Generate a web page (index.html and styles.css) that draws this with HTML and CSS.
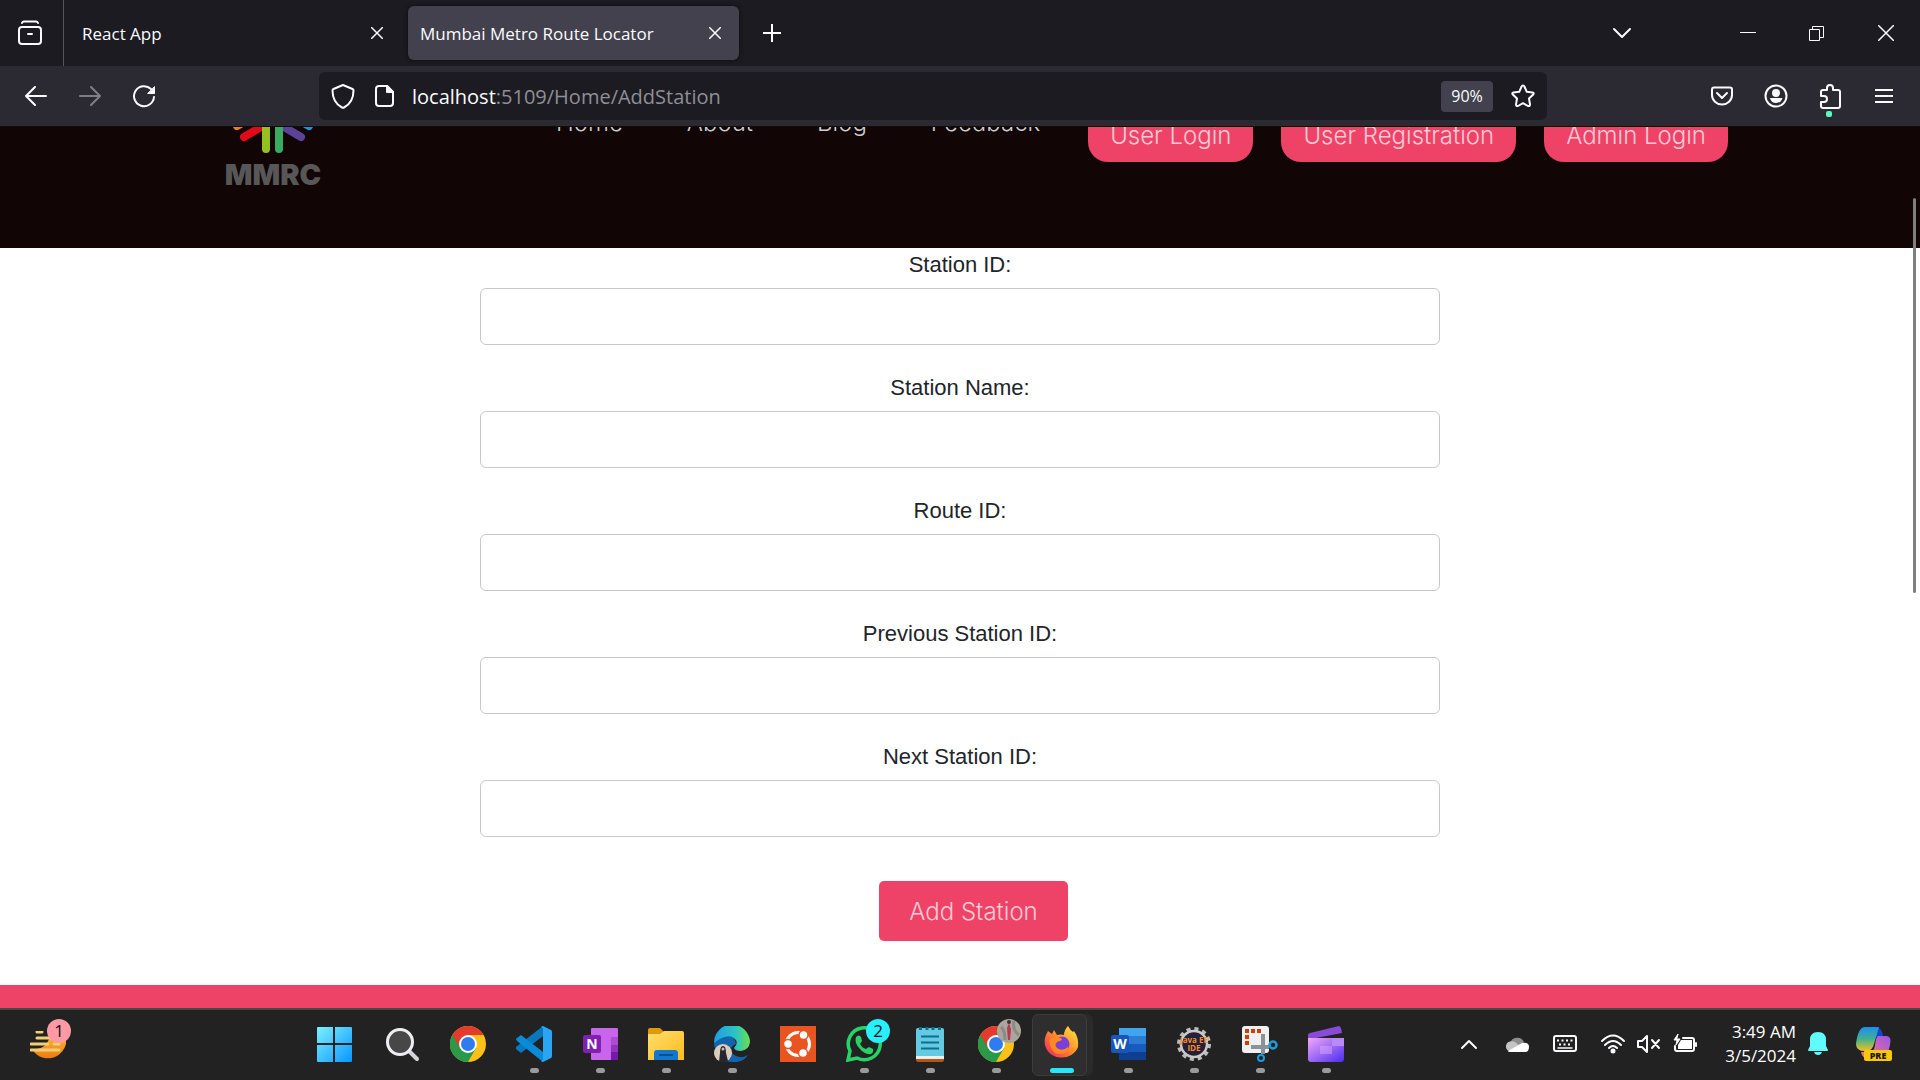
FILE: index.html
```html
<!DOCTYPE html>
<html lang="en">
<head>
<meta charset="utf-8">
<title>Mumbai Metro Route Locator</title>
<link rel="stylesheet" href="styles.css">
</head>
<body>
<div class="desktop">
  <header class="tabstrip">
    <button class="recent" aria-label="Recent browsing"><svg width="24" height="24" viewBox="0 0 24 24" class="line"><path d="M4 2q.5-1.500 2-1.500h12q1.500 0 2 1.500"/><rect x="1" y="6" width="22" height="17" rx="3"/><path d="M10 13h4"/></svg></button>
    <div class="tab"><span class="tab-title">React App</span><button class="tab-close" aria-label="Close tab"><svg width="12" height="12" viewBox="0 0 12 12" class="thin"><path d="M0 0l12 12M12 0L0 12"/></svg></button></div>
    <div class="tab tab-active"><span class="tab-title">Mumbai Metro Route Locator</span><button class="tab-close" aria-label="Close tab"><svg width="12" height="12" viewBox="0 0 12 12" class="thin"><path d="M0 0l12 12M12 0L0 12"/></svg></button></div>
    <button class="tool" aria-label="New tab"><svg width="18" height="18" viewBox="0 0 18 18" class="line"><path d="M9 0v18M0 9h18"/></svg></button>
    <div class="window-controls">
      <button class="tool list-tabs" aria-label="List all tabs"><svg width="20" height="12" viewBox="0 0 20 12" class="line"><path d="M2 2l8 8 8-8"/></svg></button>
      <button class="win" aria-label="Minimize"><svg width="16" height="16" viewBox="0 0 16 16" class="hair"><path d="M0 7.500h16"/></svg></button>
      <button class="win" aria-label="Restore"><svg width="15" height="15" viewBox="0 0 15 15" class="hair"><path d="M.5 3.500h10v11H.5zM3.500 3.500v-3h11v11h-4"/></svg></button>
      <button class="win" aria-label="Close"><svg width="16" height="16" viewBox="0 0 16 16" class="thin"><path d="M0 0l16 16M16 0L0 16"/></svg></button>
    </div>
  </header>

  <div class="toolbar">
    <div class="tools">
      <button class="tool" aria-label="Back"><svg width="22" height="20" viewBox="0 0 22 20" class="line"><path d="M21 10H1M10 1l-9 9 9 9"/></svg></button>
      <button class="tool dim" aria-label="Forward"><svg width="22" height="20" viewBox="0 0 22 20" class="line"><path d="M1 10h20M12 1l9 9-9 9"/></svg></button>
      <button class="tool" aria-label="Reload"><svg width="24" height="24" viewBox="0 0 24 24" class="line"><path d="M22 13a10 10 0 1 1-3-8"/><path d="M22.500 3v6.500H16z" fill="#fbfbfe" stroke-width="1"/></svg></button>
    </div>
    <div class="urlbar">
      <button class="shield" aria-label="Tracking protection"><svg width="24" height="26" viewBox="0 0 24 26" class="line"><path d="M12 2l9.500 4q1 .5 1 1.500 0 12-9.500 17-1 .5-2 0Q1.500 19.500 1.500 7.500q0-1 1-1.500z"/></svg></button>
      <button class="docinfo" aria-label="Site information"><svg width="20" height="22" viewBox="0 0 20 22" class="line"><path d="M4 1h8l6 6v11q0 3-3 3H4q-3 0-3-3V4q0-3 3-3z"/><path d="M12 1v6h6z" fill="#fbfbfe"/></svg></button>
      <div class="address"><span class="host">localhost</span>:5109/Home/AddStation</div>
      <button class="zoom">90%</button>
      <button class="star" aria-label="Bookmark"><svg width="24" height="24" viewBox="0 0 24 24" class="line"><path d="M12 1.500q1 0 1.400 1l2.400 5.300 5.700.7q2 .5.700 2L18 14.500l1 6q0 2-2 1.500l-5-2.800L7 22q-2 .5-2-1.500l1-6-4.200-4q-1.300-1.500.700-2l5.700-.7 2.400-5.300q.4-1 1.400-1z"/></svg></button>
    </div>
    <div class="tools">
      <button class="tool" aria-label="Pocket"><svg width="22" height="20" viewBox="0 0 22 20" class="line"><path d="M3 1.500h16q2 0 2 2V9a10 9.500 0 0 1-20 0V3.500q0-2 2-2z"/><path d="M6 7l5 5 5-5"/></svg></button>
      <button class="tool" aria-label="Account"><svg width="24" height="24" viewBox="0 0 24 24" class="line"><circle cx="12" cy="12" r="10.500"/><g fill="#fbfbfe" stroke="none"><circle cx="12" cy="9" r="4"/><path d="M6 14h12.500q-1.500 5-6.500 5t-6-5z"/></g></svg></button>
      <button class="tool alert" aria-label="Extensions"><svg width="22" height="25" viewBox="0 0 22 25" class="line"><path d="M2 8q0-2 2-2h4V4a3 3 0 0 1 6 0v2h5q2 0 2 2v14q0 2-2 2H4q-2 0-2-2v-4h3a3 3 0 0 0 0-6H2z"/></svg></button>
      <button class="tool" aria-label="Menu"><svg width="18" height="16" viewBox="0 0 18 16" class="line"><path d="M0 2h18M0 8h18M0 14h18"/></svg></button>
    </div>
  </div>

  <div class="viewport">
    <div class="page">
      <header class="site-header">
        <svg class="logo" width="94" height="112" viewBox="0 0 94 112" role="img" aria-label="MMRC">
          <g fill="none" stroke-width="8" stroke-linecap="round">
            <path d="M11 51l23-13" stroke="#f07d13"/><path d="M83 51L60 38" stroke="#1d93d2"/>
            <path d="M18 62l22-13" stroke="#e30a17"/><path d="M75 62L53 49" stroke="#5c4397"/>
            <path d="M40 46v28" stroke="#95c11f"/><path d="M53 46v28" stroke="#3aaa60"/>
          </g>
          <text x="47" y="110" text-anchor="middle" class="logo-name">MMRC</text>
        </svg>
        <nav class="links"><a href="#">Home</a><a href="#">About</a><a href="#">Blog</a><a href="#">Feedback</a></nav>
        <div class="accounts"><button class="pill">User Login</button><button class="pill">User Registration</button><button class="pill">Admin Login</button></div>
      </header>
      <form class="station-form">
        <label for="sid">Station ID:</label><input id="sid" type="text">
        <label for="sname">Station Name:</label><input id="sname" type="text">
        <label for="rid">Route ID:</label><input id="rid" type="text">
        <label for="pid">Previous Station ID:</label><input id="pid" type="text">
        <label for="nid">Next Station ID:</label><input id="nid" type="text">
        <button class="submit" type="button">Add Station</button>
      </form>
      <footer class="site-footer"></footer>
    </div>
    <div class="scrollbar"></div>
  </div>

  <footer class="taskbar">
    <svg width="0" height="0" class="defs"><defs>
      <linearGradient id="win" gradientUnits="userSpaceOnUse" x1="0" y1="0" x2="36" y2="36"><stop stop-color="#7df3ff"/><stop offset="1" stop-color="#0b95ff"/></linearGradient>
      <linearGradient id="sun" x2="0" y2="1"><stop stop-color="#f9c33c"/><stop offset="1" stop-color="#f07a12"/></linearGradient>
      <linearGradient id="fold" x2="1" y2="1"><stop stop-color="#ffdf70"/><stop offset="1" stop-color="#fdbb1a"/></linearGradient>
      <linearGradient id="edge"><stop stop-color="#1e9de3"/><stop offset=".6" stop-color="#2cc3c4"/><stop offset="1" stop-color="#6be04a"/></linearGradient>
      <linearGradient id="fox" x1="1" x2="0" y2="1"><stop stop-color="#fff04a"/><stop offset=".45" stop-color="#ff9526"/><stop offset="1" stop-color="#f5156c"/></linearGradient>
      <linearGradient id="clip" x2="1" y2="1"><stop stop-color="#f2a8f8"/><stop offset="1" stop-color="#4c2cf0"/></linearGradient>
      <linearGradient id="cop1" x2="0" y2="1"><stop stop-color="#1b8ff0"/><stop offset=".5" stop-color="#43b08f"/><stop offset="1" stop-color="#f5c21b"/></linearGradient>
      <linearGradient id="cop2" x1="1" x2="0" y2="1"><stop stop-color="#9a55f0"/><stop offset="1" stop-color="#ff7a68"/></linearGradient>
    </defs></svg>
    <button class="widget" aria-label="Widgets"><svg width="36" height="28" viewBox="0 0 36 28"><path d="M34 0a17 17 0 0 1-32 18q13 2 18-12z" fill="url(#sun)"/><path d="M7 1h5M7 7h17M1 13h17M24 13h5M1 19h28" stroke="#f2cf74" stroke-width="3" stroke-linecap="round"/></svg><span class="badge badge-pink">1</span></button>
    <div class="apps">
      <button class="app" aria-label="Start"><svg width="36" height="36" viewBox="0 0 36 36"><path d="M1 2q0-1 1-1h15v16H1zM19 1h16q1 0 1 1v15H19zM1 19h16v17H2q-1 0-1-1zM19 19h17v16q0 1-1 1H19z" fill="url(#win)"/></svg></button>
      <button class="app" aria-label="Search"><svg width="36" height="36" viewBox="0 0 36 36"><path d="M25 25l8 8" stroke="#d4d4dc" stroke-width="4" stroke-linecap="round"/><circle cx="16" cy="16" r="12.500" fill="#474747" stroke="#eeeef0" stroke-width="3"/></svg></button>
      <button class="app" aria-label="Chrome"><svg width="36" height="36" viewBox="0 0 36 36"><circle cx="18" cy="18" r="18" fill="#fbc116"/><path d="M18 18L2.400 9A18 18 0 0 0 18 36l8-14z" fill="#2a9a48"/><path d="M18 9h15.600A18 18 0 0 0 2.400 9L10 22z" fill="#e33b2e"/><circle cx="18" cy="18" r="9" fill="#fff"/><circle cx="18" cy="18" r="7" fill="#2f7bf0"/></svg></button>
      <button class="app open" aria-label="Visual Studio Code"><svg width="36" height="36" viewBox="0 0 36 36"><path d="M27 0v10L5 27l-5-4q-1-1 0-2z" fill="#0a78bd"/><path d="M27 36V26L5 9l-4 3q-2 1 0 3z" fill="#0a8bd8"/><path d="M27 0l8 4q1 .5 1 2v24q0 1.500-1 2l-8 4q-1 0-2-1 2 0 2-3V4q0-3-2-3 1-1 2-1z" fill="#2aa5f5"/></svg></button>
      <button class="app open" aria-label="OneNote"><svg width="36" height="36" viewBox="0 0 36 36"><rect x="9" y="2" width="27" height="32" rx="1" fill="#c965ea"/><path d="M29 11h7v8h-7z" fill="#ae4bd5"/><path d="M29 19h7v7h-7z" fill="#9332bf"/><path d="M29 26h7v8h-7z" fill="#7719aa"/><rect x="1" y="9" width="18" height="18" rx="2" fill="#8020b0"/><text x="10" y="23" class="glyph">N</text></svg></button>
      <button class="app open" aria-label="File Explorer"><svg width="36" height="36" viewBox="0 0 36 36"><path d="M0 4q0-2 2-2h10l4 4-4 4H0z" fill="#e09a08"/><path d="M0 8h12l4-3h18q2 0 2 2v27H0z" fill="url(#fold)"/><path d="M6 34v-7q0-3 3-3h18q3 0 3 3v7z" fill="#1078cf"/><path d="M11 29h14" stroke="#0a4d91" stroke-width="2"/></svg></button>
      <button class="app open" aria-label="Edge"><svg width="36" height="36" viewBox="0 0 36 36"><path d="M0 18Q3 8 15 9q6 1 7 9-8 3-3 10 6 6 15 1-5 8-16 7Q2 35 0 18z" fill="#1464ad"/><path d="M0 17A18 18 0 0 1 36 16q-1 8-9 9-6 0-7-3 4-4 2-8Q15 5 0 17z" fill="url(#edge)"/><circle cx="9" cy="27" r="9" fill="#dacdbb"/><path d="M5 36l1-9q0-7 3-7t3 7l2 8q-4 2-9 1z" fill="#242633"/><circle cx="9" cy="23" r="1.500" fill="#e6b49a"/></svg></button>
      <button class="app" aria-label="Ubuntu"><svg width="36" height="36" viewBox="0 0 36 36"><path d="M0 0h36v36H0z" fill="#e95420"/><circle cx="18" cy="18" r="11.500" fill="none" stroke="#fff" stroke-width="3"/><g fill="#fff" stroke="#e95420" stroke-width="1.500"><circle cx="8" cy="18" r="4.500"/><circle cx="23.500" cy="9" r="4.500"/><circle cx="23" cy="27" r="4.500"/></g></svg></button>
      <button class="app open" aria-label="WhatsApp"><svg width="36" height="36" viewBox="0 0 36 36"><path d="M2 34l2-9a16 16 0 1 1 7 7z" fill="none" stroke="#25d366" stroke-width="3.500"/><path d="M10 11q3-3 5 0l1 4-2 3q2 4 6 5l3-2 4 2q1 3-2 5-6 1-11-5-6-6-4-12z" fill="#25d366"/></svg><span class="badge badge-cyan">2</span></button>
      <button class="app open" aria-label="Notepad"><svg width="36" height="36" viewBox="0 0 36 36"><path d="M4 32h28v2q0 2-2 2H6q-2 0-2-2z" fill="#b5550f"/><path d="M4 28h28v5H4z" fill="#eee"/><path d="M4 4q0-2 2-2h24q2 0 2 2v26H4z" fill="#66c9e2"/><path d="M9 10.500h18M9 16.500h18M9 22.500h18" stroke="#08708e" stroke-width="2"/><path d="M8.500 1v3M15 1v3M21 1v3M27.500 1v3" stroke="#08708e" stroke-width="3"/></svg></button>
      <button class="app open" aria-label="Chrome profile"><svg width="44" height="44" viewBox="0 0 44 44" class="with-avatar"><g transform="translate(0 8)"><circle cx="18" cy="18" r="18" fill="#fbc116"/><path d="M18 18L2.400 9A18 18 0 0 0 18 36l8-14z" fill="#2a9a48"/><path d="M18 9h15.600A18 18 0 0 0 2.400 9L10 22z" fill="#e33b2e"/><circle cx="18" cy="18" r="9" fill="#fff"/><circle cx="18" cy="18" r="7" fill="#2f7bf0"/></g><circle cx="31" cy="13" r="12" fill="#a9a69f"/><path d="M23 9q4 3 4 13M36 3q-2 9 5 14" stroke="#8c8c82" stroke-width="3" fill="none"/><path d="M31 5l2 6-1 11h-2l-1-12z" fill="#b93950"/><circle cx="31" cy="4" r="2" fill="#40303a"/></svg></button>
      <button class="app open current" aria-label="Firefox"><svg width="36" height="36" viewBox="0 0 36 36"><path d="M2 9l2-4 4 3 2-4 3 5q4-1 7 0 0-5 4-9 2 4 5 6l1-1q5 7 4 16a17 15 0 0 1-33-2Q0 13 2 9z" fill="url(#fox)"/><circle cx="18" cy="18" r="7.500" fill="#7a3fd8"/><path d="M5 14q5-5 12-2l1 2-5 2q-3 3 0 6 5 4 11-1 0 7-8 7-9 0-11-14z" fill="#ff8a20"/></svg></button>
      <button class="app open" aria-label="Word"><svg width="36" height="36" viewBox="0 0 36 36"><path d="M9 2h27v8H9z" fill="#41a5ee"/><path d="M9 10h27v8H9z" fill="#2b7cd3"/><path d="M9 18h27v8H9z" fill="#185abd"/><path d="M9 26h27v8H9z" fill="#103f91"/><rect x="1" y="9" width="18" height="18" rx="2" fill="#1856ba"/><text x="10" y="23" class="glyph">W</text></svg></button>
      <button class="app open" aria-label="Java EE IDE"><svg width="36" height="36" viewBox="0 0 36 36"><circle cx="18" cy="18" r="15" fill="none" stroke="#bcbcbc" stroke-width="4" stroke-dasharray="4 3.850"/><circle cx="18" cy="18" r="13" fill="#252039" stroke="#c9c9c9" stroke-width="2.500"/><text x="18" y="17" class="ide">Java EE</text><text x="18" y="25" class="ide">IDE</text></svg></button>
      <button class="app open" aria-label="Snipping Tool"><svg width="36" height="36" viewBox="0 0 36 36"><rect width="27" height="27" rx="3" fill="#eef0f2"/><path d="M3 5h4m2 0h4m2 0h4M5 9v4m0 2v4" stroke="#d83b01" stroke-width="4"/><path d="M21 8v20M9 21h18" stroke="#8d9299" stroke-width="4"/><circle cx="31" cy="19" r="3.500" fill="none" stroke="#1d9be0" stroke-width="2.500"/><circle cx="19" cy="32" r="3" fill="none" stroke="#1d9be0" stroke-width="2"/></svg></button>
      <button class="app open" aria-label="Clipchamp"><svg width="36" height="36" viewBox="0 0 36 36"><path d="M0 9q0-2 2-2L31 0q2 0 3 7L8 12H0z" fill="#8a4ad8"/><path d="M0 12h36v21q0 3-3 3H3q-3 0-3-3z" fill="url(#clip)"/><path d="M12 20h12v8H12z" fill="#d6a5fb" opacity=".5"/><path d="M24 12h12v8H24z" fill="#b88af8"/></svg></button>
    </div>
    <div class="tray">
      <button class="tray-btn" aria-label="Show hidden icons"><svg width="18" height="12" viewBox="0 0 18 12" class="line"><path d="M2 10l7-7 7 7"/></svg></button>
      <button class="tray-btn" aria-label="OneDrive"><svg width="24" height="18" viewBox="0 0 24 18"><path d="M5 8a7.500 7.500 0 0 1 14-1l-5 5z" fill="#8e8e8e"/><path d="M4 16a5 5 0 0 1 1-9.500q4-1 7 2l8 7z" fill="#c4c4c4"/><path d="M3 16l14-8q7-1 7 4 0 5-4 5H5q-2 0-2-1z" fill="#fff"/></svg></button>
      <button class="tray-btn" aria-label="Keyboard"><svg width="24" height="18" viewBox="0 0 24 18" class="line"><rect x="1" y="1" width="22" height="15" rx="2"/><path d="M4 5.500h16M6 9.500h12" stroke-dasharray="2 2.500" stroke-linecap="butt"/><path d="M5 13h14" stroke-width="1.500"/></svg></button>
      <button class="status" aria-label="Network, volume and battery">
        <svg width="24" height="20" viewBox="0 0 24 20" class="line"><path d="M1 7q11-11 22 0M4 11q8-8 16 0M8 14q4-4 8 0"/><circle cx="12" cy="17" r="1.500" fill="#fff"/></svg>
        <svg width="24" height="20" viewBox="0 0 24 20" class="line"><path d="M1 7h4l5-5v16l-5-5H1zM15 6l7 8M22 6l-7 8"/></svg>
        <svg width="24" height="20" viewBox="0 0 24 20" class="line"><path d="M10 4h9q2 0 2 2v9q0 2-2 2H4q-2 0-2-2v-3"/><path d="M8 6h11v9H5v-4z" fill="#fff" stroke="none"/><path d="M5 0L1 6h3l-1 5 4-6H4z" fill="#fff" stroke-width="1"/><path d="M23 9v3"/></svg>
      </button>
      <button class="clock"><span>3:49 AM</span><span>3/5/2024</span></button>
      <button class="bell" aria-label="Notifications"><svg width="20" height="24" viewBox="0 0 20 24"><path d="M10 0q8 0 8 8v6l2 4q0 1-1 1H1q-1 0-1-1l2-4V8q0-8 8-8zM6 20h8q-1 3-4 3t-4-3z" fill="#60fbff"/></svg></button>
      <button class="copilot" aria-label="Copilot"><svg width="36" height="36" viewBox="0 0 36 36"><path d="M19 1q7 0 8 9l-9 2z" fill="#1646c8"/><path d="M9 1h14l-5 17q-2 7-7 7-11 1-11-7Q2 1 9 1z" fill="url(#cop1)"/><path d="M22 10h9q5 1 3 9-2 12-11 14h-9q-8 0-9-7h9q4 0 5-7 1-8 3-9z" fill="url(#cop2)"/><rect x="8" y="24" width="28" height="11" rx="2" fill="#fcc70b"/><text x="22" y="33" class="pre">PRE</text></svg></button>
    </div>
  </footer>
</div>
</body>
</html>
```
FILE: styles.css
```css
* { box-sizing: border-box; }

body {
  margin: 0;
  font-family: "Open Sans", "Noto Sans", sans-serif;
  color: #fbfbfe;
  background: #1c1b22;
}

button {
  display: flex;
  align-items: center;
  justify-content: center;
  margin: 0;
  padding: 0;
  border: 0;
  background: none;
  color: inherit;
  font: inherit;
}

.desktop {
  display: flex;
  flex-direction: column;
  height: 100vh;
  overflow: hidden;
}

.line, .thin, .hair { fill: none; stroke: #fbfbfe; stroke-width: 2; stroke-linecap: round; stroke-linejoin: round; }
.thin { stroke-width: 1.5; stroke-linecap: butt; }
.hair { stroke-width: 1; stroke-linecap: butt; stroke-linejoin: miter; }

/* Browser tabs */
.tabstrip { display: flex; flex: none; align-items: center; height: 66px; background: #1c1b22; }
.recent { width: 64px; height: 66px; padding-right: 3px; border-right: 1px solid #56555d; }
.recent svg { overflow: visible; }
.tab {
  display: flex;
  align-items: center;
  justify-content: space-between;
  width: 331px;
  height: 54px;
  margin-left: 6px;
  padding: 0 12px;
  border-radius: 6px;
  font-size: 17px;
}
.tab-active { margin-left: 7px; background: #42414d; box-shadow: 0 0 4px #0c0c0d; }
.tab-title { white-space: nowrap; }
.tab-close { width: 24px; height: 24px; }
.tool { position: relative; width: 54px; height: 48px; }
.tab-active + .tool { margin-left: 6px; }
.window-controls { display: flex; align-items: center; margin-left: auto; }
.list-tabs { margin-right: 64px; }
.win { width: 69px; height: 48px; }

/* Navigation toolbar */
.toolbar {
  display: flex;
  flex: none;
  align-items: center;
  height: 61px;
  background: #2b2a33;
  border-bottom: 1px solid #0c0c0d;
}
.tools { display: flex; padding: 0 9px; }
.tools:first-child { width: 319px; }
.tools:last-child { width: 373px; justify-content: flex-end; }
.dim { opacity: .4; }
.alert::after {
  content: "";
  position: absolute;
  left: 23px;
  bottom: 3px;
  width: 6px;
  height: 6px;
  border-radius: 2px;
  background: #54ffbd;
}
.urlbar { display: flex; flex: 1; align-items: center; height: 48px; border-radius: 6px; background: #1c1b22; }
.shield, .star { width: 48px; }
.docinfo { width: 36px; }
.address { flex: 1; padding-left: 9px; font-size: 20px; color: #8f8f94; }
.host { color: #fbfbfe; }
.zoom { width: 52px; height: 31px; margin-right: 6px; border-radius: 4px; background: #42414d; font-size: 16px; }

/* Web page, scrolled down a little */
.viewport { position: relative; flex: 1; overflow: hidden; background: #fff; }
.page { margin-top: -72px; font-family: Inter, "Open Sans", sans-serif; }
.scrollbar { position: absolute; top: 71px; right: 4px; width: 3px; height: 395px; border-radius: 2px; background: #7f7f7f; }

.site-header {
  display: flex;
  align-items: flex-start;
  height: 193px;
  padding: 20px 192px 0 226px;
  background: #110505;
}
.logo { flex: none; overflow: visible; }
.logo-name { font: 900 29px Inter, sans-serif; fill: #575757; }
.links { display: flex; gap: 64px; margin-left: 236px; padding-top: 33px; }
.links a { color: #d0cdcd; font-size: 24px; font-weight: 300; line-height: 30px; text-decoration: none; }
.accounts { display: flex; gap: 28px; margin-left: auto; padding-top: 33px; }
.pill {
  height: 54px;
  padding: 0 22px;
  border-radius: 20px;
  background: #ef4267;
  color: #fbcbd6;
  font-size: 24px;
  font-weight: 300;
  white-space: nowrap;
}

.station-form {
  display: flex;
  flex-direction: column;
  align-items: center;
  width: 50%;
  margin: 0 auto;
  padding-bottom: 44px;
}
.station-form label {
  margin-bottom: 6px;
  color: #212529;
  font-family: "Liberation Sans", Arial, sans-serif;
  font-size: 22px;
  line-height: 34px;
}
.station-form input {
  width: 100%;
  height: 57px;
  margin-bottom: 26px;
  padding: 0 12px;
  border: 1px solid #c8c8c8;
  border-radius: 6px;
  background: #fff;
  font-size: 22px;
}
.submit {
  height: 60px;
  margin: 18px 0 0 27px;
  padding: 0 30px;
  border-radius: 5px;
  background: #ef4267;
  color: #fbcbd6;
  font-size: 24px;
  font-weight: 300;
}
.site-footer { height: 60px; background: #ef4267; }

/* Taskbar */
.taskbar { display: flex; flex: none; height: 72px; border-top: 2px solid #474747; background: #222; color: #fff; }
.defs { position: absolute; }
.widget { position: relative; width: 36px; margin: 0 235px 0 30px; }
.apps { display: flex; }
.app { position: relative; width: 66px; height: 68px; }
.app:first-child { margin-right: 2px; }
.badge {
  position: absolute;
  top: 9px;
  width: 24px;
  height: 24px;
  border-radius: 50%;
  color: #111;
  font-size: 17px;
  line-height: 24px;
  text-align: center;
}
.badge-pink { left: 17px; background: #ff99a4; }
.badge-cyan { left: 35px; background: #26f0fb; }
.open::after {
  content: "";
  position: absolute;
  bottom: 5px;
  left: 29px;
  width: 9px;
  height: 5px;
  border-radius: 3px;
  background: #9a9a9a;
}
.with-avatar { margin: 0 0 8px 8px; }
.current::before {
  content: "";
  position: absolute;
  top: 4px;
  left: 3px;
  width: 53px;
  height: 60px;
  border: 1px solid #3c3c3c;
  border-radius: 6px;
  background: #2e2e2e;
  box-shadow: 6px 0 0 #2a2a2a;
}
.current svg { position: relative; }
.current::after { left: 21px; width: 24px; background: #26e6f8; }
.glyph { font: bold 14px "Open Sans", sans-serif; fill: #fff; text-anchor: middle; }
.ide { font: bold 8px "Open Sans", sans-serif; fill: #f58a2c; text-anchor: middle; }
.pre { font: 800 9px "Open Sans", sans-serif; fill: #1b1b1b; text-anchor: middle; }

.tray { display: flex; align-items: center; height: 68px; margin-left: auto; padding-right: 28px; }
.tray-btn { width: 48px; height: 48px; }
.status { gap: 12px; width: 108px; margin-left: 6px; }
.clock { flex-direction: column; align-items: flex-end; width: 93px; font-size: 17px; line-height: 24px; }
.bell { width: 36px; margin: 0 20px 0 4px; }
.copilot { width: 36px; }
```
